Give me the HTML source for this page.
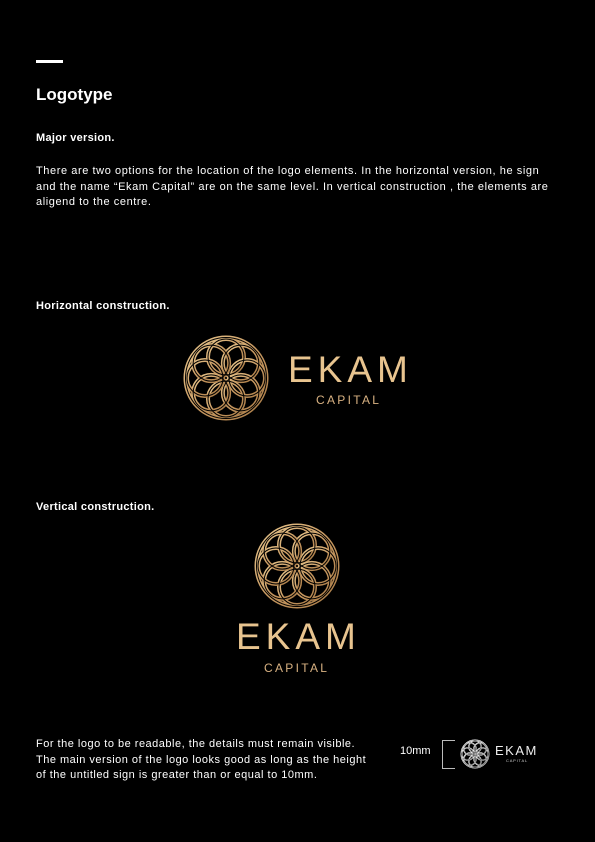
<!DOCTYPE html>
<html><head><meta charset="utf-8"><style>
html,body{margin:0;padding:0;background:#000;}
body{width:595px;height:842px;position:relative;overflow:hidden;font-family:"Liberation Sans",sans-serif;color:#fff;}
.t{position:absolute;left:36px;font-size:11px;line-height:15.5px;white-space:nowrap;letter-spacing:0.58px;}
.b{font-weight:bold;letter-spacing:0.3px;}
svg{position:absolute;overflow:visible;}
</style></head><body>
<svg width="0" height="0">
<defs>
<linearGradient id="g" x1="0" y1="0" x2="1" y2="1">
<stop offset="0" stop-color="#e9c88f"/><stop offset="0.5" stop-color="#c99a62"/><stop offset="1" stop-color="#a87b47"/>
</linearGradient>
<g id="c8">
<circle cx="0" cy="-21" r="18"/><circle cx="14.85" cy="-14.85" r="18"/><circle cx="21" cy="0" r="18"/><circle cx="14.85" cy="14.85" r="18"/>
<circle cx="0" cy="21" r="18"/><circle cx="-14.85" cy="14.85" r="18"/><circle cx="-21" cy="0" r="18"/><circle cx="-14.85" cy="-14.85" r="18"/>
</g>
<g id="sign">
<circle cx="0" cy="0" r="40.5" fill="none" stroke="url(#g)" stroke-width="4"/>
<g fill="none" stroke="url(#g)" stroke-width="4"><use href="#c8"/></g>
<g fill="none" stroke="#000" stroke-width="1"><circle cx="0" cy="0" r="40.5"/><use href="#c8"/></g>
</g>
</defs>
</svg>
<div style="position:absolute;left:36px;top:60px;width:27px;height:3px;background:#fff"></div>
<div style="position:absolute;left:36px;top:85px;font-size:17px;font-weight:bold;">Logotype</div>
<div class="t b" style="top:131px">Major version.</div>
<div class="t" style="top:164px">There are two options for the location of the logo elements. In the horizontal version, he sign<br>and the name “Ekam Capital” are on the same level. In vertical construction , the elements are<br>aligend to the centre.</div>
<div class="t b" style="top:299px">Horizontal construction.</div>
<div class="t b" style="top:500px">Vertical construction.</div>

<svg style="left:226px;top:378px" width="1" height="1"><use href="#sign"/></svg>
<div style="position:absolute;left:288px;top:348px;font-size:37px;letter-spacing:5px;color:#e8c48f;line-height:44px">EKAM</div>
<div style="position:absolute;left:316px;top:393px;font-size:12px;letter-spacing:2.3px;color:#d9b282;line-height:14px">CAPITAL</div>

<svg style="left:297px;top:566px" width="1" height="1"><use href="#sign"/></svg>
<div style="position:absolute;left:236px;top:615px;font-size:37px;letter-spacing:5px;color:#e8c48f;line-height:44px">EKAM</div>
<div style="position:absolute;left:264px;top:661px;font-size:12px;letter-spacing:2.3px;color:#d9b282;line-height:14px">CAPITAL</div>

<div class="t" style="top:737px;letter-spacing:0.5px">For the logo to be readable, the details must remain visible.<br>The main version of the logo looks good as long as the height<br>of the untitled sign is greater than or equal to 10mm.</div>
<div style="position:absolute;left:400px;top:745px;font-size:11px">10mm</div>
<div style="position:absolute;left:442px;top:740px;width:12px;height:27px;border:1px solid #bbb;border-right:none"></div>
<svg style="left:475px;top:754px" width="1" height="1"><g transform="scale(0.34)" style="filter:grayscale(1) brightness(1.6)"><use href="#sign"/></g></svg>
<div style="position:absolute;left:495px;top:743px;font-size:13px;letter-spacing:1.5px;color:#eee;line-height:15px">EKAM</div>
<div style="position:absolute;left:506px;top:758px;font-size:4px;letter-spacing:0.8px;color:#ccc">CAPITAL</div>
</body></html>
